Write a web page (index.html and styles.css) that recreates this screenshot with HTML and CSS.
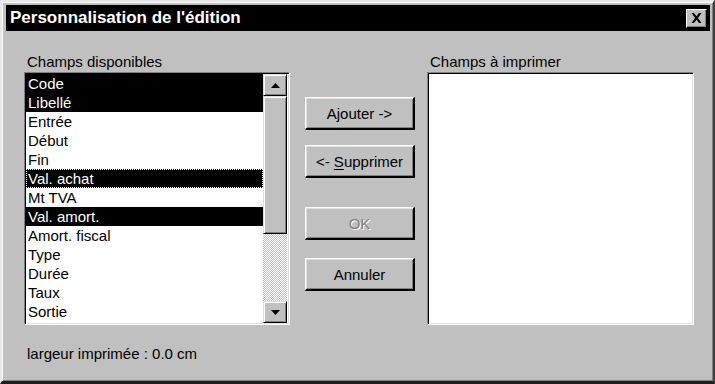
FILE: index.html
```html
<!DOCTYPE html>
<html>
<head>
<meta charset="utf-8">
<link rel="stylesheet" href="styles.css">
</head>
<body>
<div class="window">
  <div class="titlebar">
    <span class="title">Personnalisation de l'édition</span>
    <span class="close"><svg width="11" height="10" viewBox="0 0 11 10"><path d="M0.5 0h2.5l2.5 3.2L8 0h2.5L7 5l3.5 5H8L5.5 6.8 3 10H0.5L4 5z" fill="#000"/></svg></span>
  </div>
  <div class="content">
    <div class="col">
      <div class="label">Champs disponibles</div>
      <div class="listbox">
        <div class="rows">
          <div class="row sel">Code</div>
          <div class="row sel">Libellé</div>
          <div class="row">Entrée</div>
          <div class="row">Début</div>
          <div class="row">Fin</div>
          <div class="row sel focus">Val. achat</div>
          <div class="row">Mt TVA</div>
          <div class="row sel">Val. amort.</div>
          <div class="row">Amort. fiscal</div>
          <div class="row">Type</div>
          <div class="row">Durée</div>
          <div class="row">Taux</div>
          <div class="row">Sortie</div>
        </div>
        <div class="scrollbar">
          <div class="sbtn"><svg width="9" height="5" viewBox="0 0 9 5"><path d="M4.5 0L9 5H0z" fill="#000"/></svg></div>
          <div class="thumb"></div>
          <div class="track"></div>
          <div class="sbtn"><svg width="9" height="5" viewBox="0 0 9 5"><path d="M0 0h9L4.5 5z" fill="#000"/></svg></div>
        </div>
      </div>
      <div class="footer">largeur imprimée : 0.0 cm</div>
    </div>
    <div class="buttons">
      <div class="btn b1"><span>Ajouter -&gt;</span></div>
      <div class="btn b2"><span>&lt;-&nbsp;<u>S</u>upprimer</span></div>
      <div class="btn b3 disabled"><span>OK</span></div>
      <div class="btn b4"><span>Annuler</span></div>
    </div>
    <div class="col right">
      <div class="label">Champs à imprimer</div>
      <div class="listbox empty"></div>
    </div>
  </div>
</div>
</body>
</html>
```
FILE: styles.css
```css
html, body {
  margin: 0;
  padding: 0;
  background: #c0c0c0;
}
body {
  font-family: "Liberation Sans", Arial, sans-serif;
  font-size: 15px;
  color: #000;
}
.window {
  width: 715px;
  height: 384px;
  box-sizing: border-box;
  background: #c0c0c0;
  border-top: 2px solid #e8e8e8;
  border-left: 2px solid #e8e8e8;
  border-right: 2px solid #404040;
  border-bottom: 3px solid #202020;
  box-shadow: inset 1px 1px 0 #ffffff, inset -1px -1px 0 #808080;
  padding: 3px 3px 0 4px;
}
.titlebar {
  height: 26px;
  background: #000;
  display: flex;
  align-items: center;
  justify-content: space-between;
  padding: 0 3px 0 4px;
}
.title {
  color: #fff;
  font-weight: bold;
  font-size: 17px;
}
.close {
  width: 21px;
  height: 19px;
  box-sizing: border-box;
  background: #c0c0c0;
  border-top: 1px solid #fff;
  border-left: 1px solid #fff;
  border-right: 1px solid #000;
  border-bottom: 1px solid #000;
  box-shadow: inset -1px -1px 0 #808080;
  display: flex;
  align-items: center;
  justify-content: center;
}
.content {
  display: flex;
  padding: 23px 0 0 18px;
}
.col {
  width: 266px;
  display: flex;
  flex-direction: column;
}
.right {
  width: 267px;
  margin-left: 12px;
}
.label {
  line-height: 16px;
  height: 16px;
  margin: 0 0 2px 3px;
}
.listbox {
  height: 253px;
  box-sizing: border-box;
  background: #fff;
  border-top: 1px solid #808080;
  border-left: 1px solid #808080;
  border-right: 1px solid #fff;
  border-bottom: 1px solid #fff;
  box-shadow: inset 1px 1px 0 #000, inset -1px -1px 0 #dfdfdf;
  padding: 1px;
  display: flex;
}
.rows {
  flex: 1;
  display: flex;
  flex-direction: column;
}
.row {
  height: 19px;
  line-height: 19px;
  padding-left: 2px;
  font-size: 15px;
}
.row.sel {
  background: #000;
  color: #fff;
}
.row.focus {
  outline: 1px dotted #fff;
  outline-offset: -1px;
}
.scrollbar {
  width: 24px;
  display: flex;
  flex-direction: column;
  margin-right: 1px;
}
.sbtn, .thumb {
  box-sizing: border-box;
  background: #c0c0c0;
  border-top: 1px solid #dfdfdf;
  border-left: 1px solid #dfdfdf;
  border-right: 1px solid #000;
  border-bottom: 1px solid #000;
  box-shadow: inset 1px 1px 0 #fff, inset -1px -1px 0 #808080;
}
.sbtn {
  height: 22px;
  display: flex;
  align-items: center;
  justify-content: center;
}
.thumb {
  height: 138px;
}
.track {
  flex: 1;
  background: repeating-conic-gradient(#ffffff 0 25%, #c0c0c0 0 50%) 0 0 / 2px 2px;
}
.footer {
  margin: 21px 0 0 3px;
  line-height: 16px;
}
.buttons {
  width: 110px;
  margin-left: 15px;
  display: flex;
  flex-direction: column;
}
.btn {
  height: 33px;
  box-sizing: border-box;
  background: #c0c0c0;
  border-top: 1px solid #fff;
  border-left: 1px solid #fff;
  border-right: 2px solid #000;
  border-bottom: 2px solid #000;
  box-shadow: inset 1px 1px 0 #dfdfdf, inset -1px -1px 0 #808080;
  display: flex;
  align-items: center;
  justify-content: center;
  font-size: 15px;
}
.b1 { margin-top: 43px; }
.b2 { margin-top: 15px; }
.b3 { margin-top: 29px; }
.b4 { margin-top: 18px; }
.btn.disabled {
  color: #808080;
  text-shadow: 1px 1px 0 #fff;
}
u {
  text-decoration: underline;
  text-underline-offset: 2px;
}
```
